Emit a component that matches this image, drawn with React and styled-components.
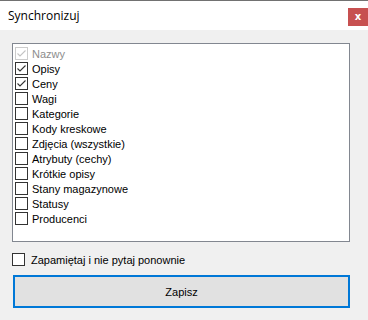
import React, { useState } from 'react'
import styled, { createGlobalStyle } from 'styled-components'

const GlobalStyle = createGlobalStyle`
  html, body {
    margin: 0;
    padding: 0;
    background: #f0f0f0;
  }
`

const Window = styled.div`
  width: 368px;
  height: 320px;
  box-sizing: border-box;
  border-top: 1px solid #717171;
  background: #f0f0f0;
  font-family: "Liberation Sans", Arial, sans-serif;
  font-size: 11px;
  color: #000;
  overflow: hidden;
`

const TitleBar = styled.div`
  height: 29px;
  background: #fff;
  display: flex;
  align-items: flex-start;
  justify-content: space-between;
`

const Title = styled.div`
  font-family: "Open Sans", "Noto Sans", sans-serif;
  font-size: 12px;
  line-height: 16px;
  padding: 7px 0 0 8px;
  color: #000;
`

const CloseButton = styled.div`
  width: 20px;
  height: 18px;
  margin-top: 7px;
  background: #c75050;
  color: #fff;
  font-family: "DejaVu Sans", sans-serif;
  font-weight: bold;
  font-size: 10px;
  line-height: 17px;
  text-align: center;
`

const Content = styled.div`
  padding: 13px 0 0 12px;
`

const ListBox = styled.div`
  width: 338px;
  height: 199px;
  box-sizing: border-box;
  border: 1px solid #828790;
  background: #fff;
  padding: 2px 0 0 2px;
`

const Row = styled.label`
  display: flex;
  align-items: center;
  height: 15px;
  gap: ${(p) => p.$gap || 4}px;
  color: ${(p) => (p.$disabled ? '#8d8d8d' : '#000')};
  white-space: nowrap;
`

const Box = styled.span`
  width: 13px;
  height: 13px;
  box-sizing: border-box;
  flex: none;
  border: 1px solid ${(p) => (p.$disabled ? '#cccccc' : '#333333')};
  background: #fff;
  display: flex;
  align-items: center;
  justify-content: center;
`

const Options = styled.div`
  margin-top: 10px;
`

const SaveButton = styled.button`
  display: block;
  margin: 8px 0 0 1px;
  width: 337px;
  height: 33px;
  box-sizing: border-box;
  border: 2px solid #0078d7;
  background: #e1e1e1;
  font-family: "Liberation Sans", Arial, sans-serif;
  font-size: 11px;
  color: #000;
  padding: 0;
`

function Check({ checked, disabled }) {
  return (
    <Box $disabled={disabled}>
      {checked && (
        <svg width="11" height="11" viewBox="0 0 11 11">
          <polyline
            points="1.5,5.5 4,8 9.5,2.5"
            fill="none"
            stroke={disabled ? '#c4c4c4' : '#333'}
            strokeWidth="1.1"
          />
        </svg>
      )}
    </Box>
  )
}

const items = [
  { label: 'Nazwy', checked: true, disabled: true },
  { label: 'Opisy', checked: true },
  { label: 'Ceny', checked: true },
  { label: 'Wagi' },
  { label: 'Kategorie' },
  { label: 'Kody kreskowe' },
  { label: 'Zdjęcia (wszystkie)' },
  { label: 'Atrybuty (cechy)' },
  { label: 'Krótkie opisy' },
  { label: 'Stany magazynowe' },
  { label: 'Statusy' },
  { label: 'Producenci' },
]

export default function App() {
  const [remember] = useState(false)
  return (
    <>
      <GlobalStyle />
      <Window>
        <TitleBar>
          <Title>Synchronizuj</Title>
          <CloseButton>x</CloseButton>
        </TitleBar>
        <Content>
          <ListBox>
            {items.map((it) => (
              <Row key={it.label} $disabled={it.disabled}>
                <Check checked={it.checked} disabled={it.disabled} />
                {it.label}
              </Row>
            ))}
          </ListBox>
          <Options>
            <Row $gap={6}>
              <Check checked={remember} />
              Zapamiętaj i nie pytaj ponownie
            </Row>
          </Options>
          <SaveButton>Zapisz</SaveButton>
        </Content>
      </Window>
    </>
  )
}
